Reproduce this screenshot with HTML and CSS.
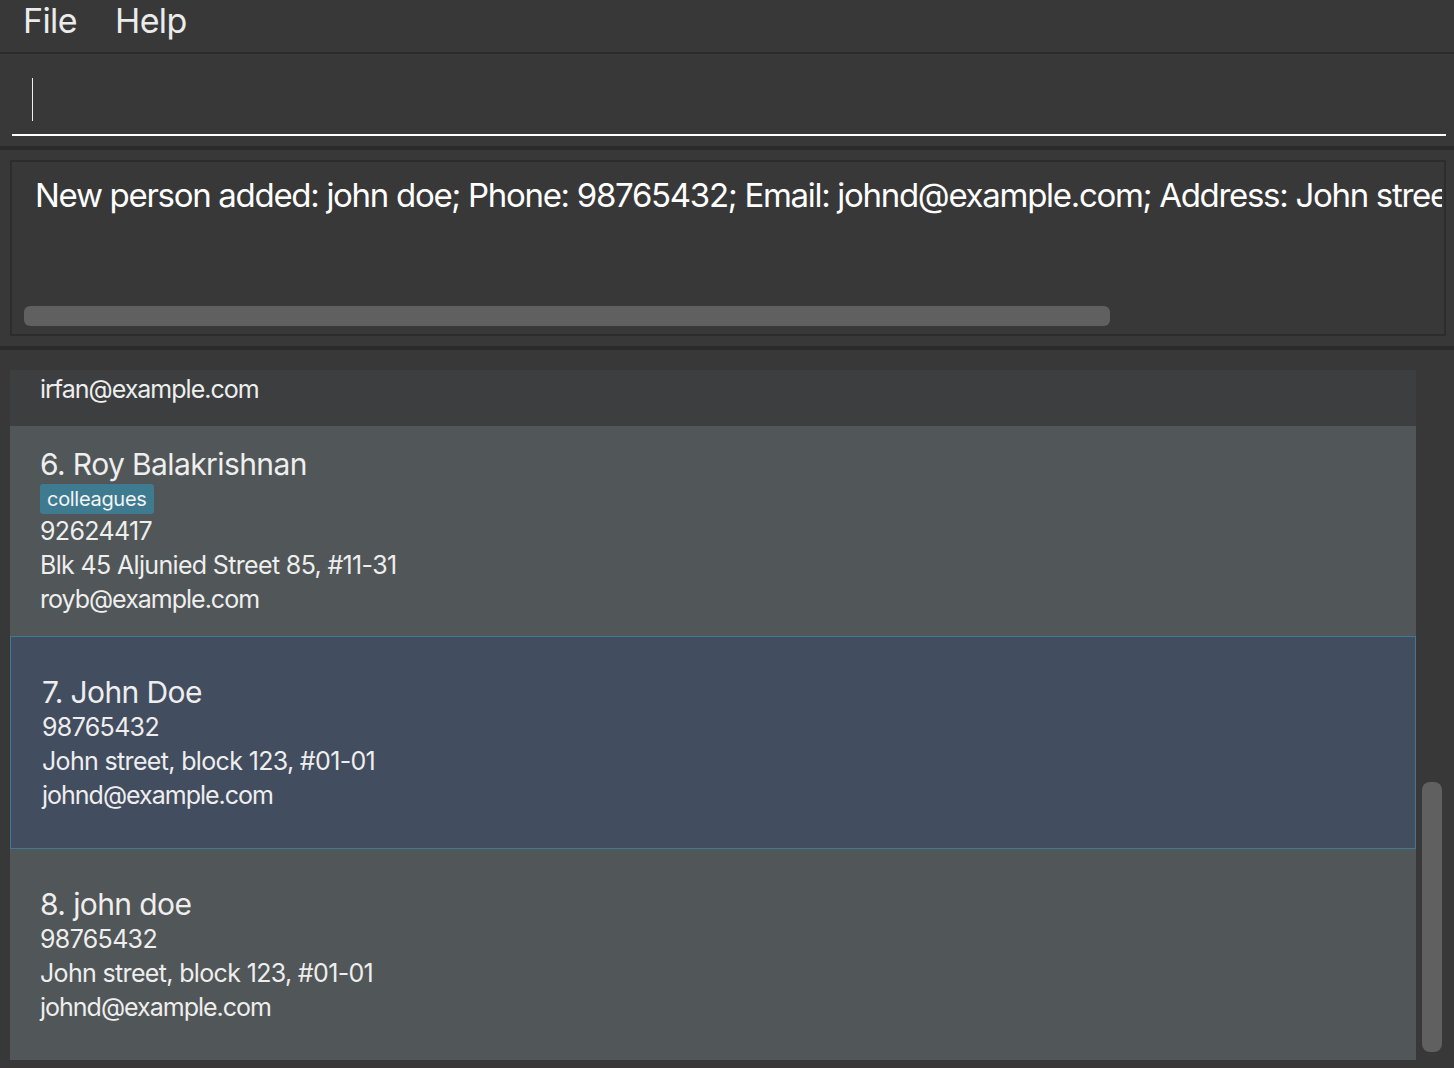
FILE: index.html
```html
<!DOCTYPE html>
<html lang="en">
<head>
<meta charset="utf-8">
<title>Address App</title>
<link rel="stylesheet" href="styles.css">
</head>
<body>
<div class="app">
  <nav class="menubar">
    <span class="menu-item">File</span>
    <span class="menu-item">Help</span>
  </nav>
  <section class="command">
    <div class="command-field"><span class="caret"></span></div>
  </section>
  <section class="result-pane">
    <div class="result-box">
      <div class="result-text">New person added: john doe; Phone: 98765432; Email: johnd@example.com; Address: John street, block 123, #01-01; Tags: </div>
      <div class="hscroll"><div class="hthumb"></div></div>
    </div>
  </section>
  <section class="list-pane">
    <div class="viewport">
      <div class="list">
        <div class="card card-odd card-tall">
          <div class="name">5. Irfan Ibrahim</div>
          <div class="tags"><span class="tag">classmates</span></div>
          <div class="line">92492021</div>
          <div class="line">Blk 47 Tampines Street 20, #17-35</div>
          <div class="line email">irfan@example.com</div>
        </div>
        <div class="card card-even card-tall">
          <div class="name">6. Roy Balakrishnan</div>
          <div class="tags"><span class="tag">colleagues</span></div>
          <div class="line">92624417</div>
          <div class="line">Blk 45 Aljunied Street 85, #11-31</div>
          <div class="line email">royb@example.com</div>
        </div>
        <div class="card card-selected">
          <div class="name">7. John Doe</div>
          <div class="line">98765432</div>
          <div class="line">John street, block 123, #01-01</div>
          <div class="line email">johnd@example.com</div>
        </div>
        <div class="card card-even card-short">
          <div class="name">8. john doe</div>
          <div class="line">98765432</div>
          <div class="line">John street, block 123, #01-01</div>
          <div class="line email">johnd@example.com</div>
        </div>
      </div>
    </div>
    <div class="vscroll"><div class="vthumb"></div></div>
  </section>
</div>
</body>
</html>
```

FILE: styles.css
```css
* { box-sizing: border-box; }
html, body { margin: 0; padding: 0; }
body {
  background: #383838;
  font-family: Inter, "Open Sans", sans-serif;
  color: #eeeeee;
  width: 1454px;
  height: 1068px;
  overflow: hidden;
}
.app {
  display: flex;
  flex-direction: column;
  height: 1068px;
}
.menubar {
  height: 54px;
  flex: none;
  display: flex;
  align-items: flex-start;
  gap: 38px;
  padding: 0 0 0 23px;
  border-bottom: 2px solid #2b2b2b;
  background: #383838;
}
.menu-item {
  font-size: 34px;
  line-height: 42px;
  color: #ebebeb;
  letter-spacing: -0.6px;
}
.command {
  height: 92px;
  flex: none;
  padding: 0 8px 0 12px;
  border-bottom: 4px solid #2a2a2a;
  box-sizing: content-box;
}
.command-field {
  height: 82px;
  border-bottom: 2px solid #ffffff;
  padding: 24px 0 0 20px;
}
.caret {
  display: block;
  width: 1px;
  height: 43px;
  background: #f0f0f0;
}
.result-pane {
  height: 176px;
  flex: none;
  padding: 10px 8px 10px 10px;
  border-bottom: 4px solid #2a2a2a;
  box-sizing: content-box;
}
.result-box {
  height: 176px;
  border: 2px solid #2c2c2c;
  display: flex;
  flex-direction: column;
  overflow: hidden;
  padding: 0 2px 8px 12px;
}
.result-text {
  flex: 1;
  white-space: nowrap;
  overflow: hidden;
  font-size: 33px;
  line-height: 40px;
  padding: 13px 0 0 11px;
  color: #ffffff;
  letter-spacing: -1.3px;
}
.hscroll {
  height: 20px;
  flex: none;
}
.hthumb {
  width: 1086px;
  height: 20px;
  border-radius: 6px;
  background: #606060;
}
.list-pane {
  flex: 1;
  display: flex;
  padding: 20px 0 8px 10px;
  min-height: 0;
}
.viewport {
  width: 1406px;
  flex: none;
  overflow: hidden;
}
.list {
  margin-top: -154px;
}
.card {
  display: flex;
  flex-direction: column;
  justify-content: center;
  padding: 0 0 0 30px;
  height: 211px;
}
.card-tall { height: 210px; }
.card-short { height: 211px; }
.card-odd { background: #3c3e40; }
.card-even { background: #515658; }
.card-selected {
  height: 213px;
  background: #424d5f;
  border: 1px solid #3e7b91;
  padding-left: 31px;
}
.name {
  font-size: 30px;
  line-height: 36px;
  color: #eeeeee;
  letter-spacing: -0.6px;
}
.tags {
  display: flex;
  margin-top: 2px;
}
.tag {
  background: #3e7b91;
  color: #f4f4f4;
  font-size: 20px;
  line-height: 30px;
  padding: 0 7px;
  border-radius: 3px;
  letter-spacing: -0.3px;
}
.line {
  font-size: 25px;
  line-height: 34px;
  color: #eeeeee;
  letter-spacing: -0.66px;
}
.email {
  letter-spacing: -1px;
}
.vscroll {
  flex: 1;
  padding: 412px 12px 0 6px;
}
.vthumb {
  width: 20px;
  height: 270px;
  border-radius: 8px;
  background: #606060;
}
```
